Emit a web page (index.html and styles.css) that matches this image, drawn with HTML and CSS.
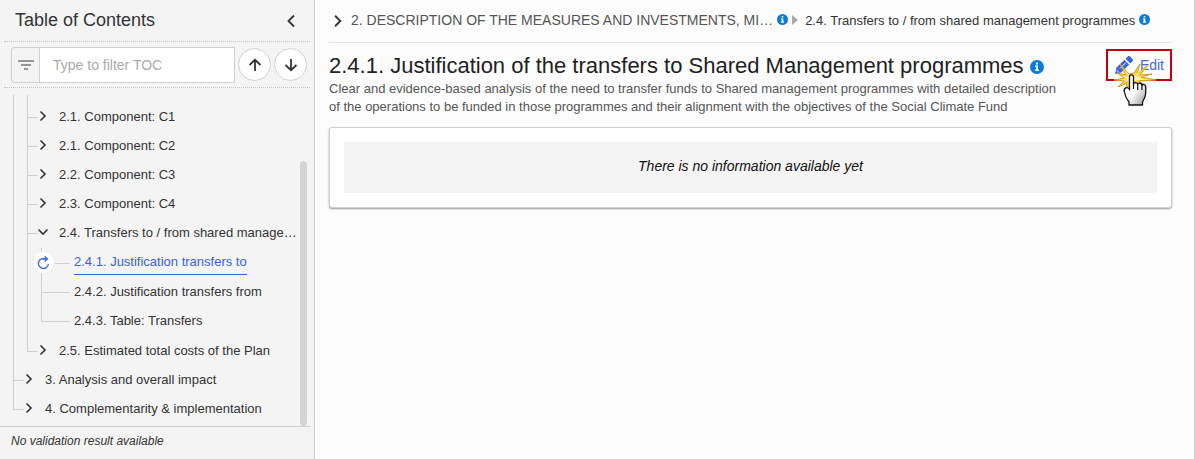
FILE: index.html
```
<!DOCTYPE html>
<html lang="en">
<head>
    <meta charset="UTF-8">
    <title>Transfers to / from shared management programmes</title>
    <meta name="viewport" content="width=device-width, initial-scale=1">
    <link rel="stylesheet" href="styles.css">
</head>
<body>

<!-- shared icons -->
<svg class="sprite" aria-hidden="true">
    <symbol id="chevron" viewBox="0 0 10 12">
        <path d="M2.5 1.5 L7 6 L2.5 10.5" fill="none" stroke="currentColor" stroke-width="1.6"/>
    </symbol>
    <symbol id="info" viewBox="0 0 14 14">
        <circle cx="7" cy="7" r="7" fill="#0d7ad8"/>
        <path d="M6 2.6h2v1.9H6zM5 5.6h3v4.1h1v1.3H5V9.7h1V6.9H5z" fill="#fff"/>
    </symbol>
</svg>

<div class="page">
    <aside class="sidebar">
        <header class="sidebar-header">
            <h2>Table of Contents</h2>
            <button class="icon-button collapse" aria-label="Collapse">
                <svg width="10" height="14" viewBox="0 0 10 14"><path d="M8 1.5 L2.5 7 L8 12.5" fill="none" stroke="currentColor" stroke-width="1.8"/></svg>
            </button>
        </header>

        <div class="filter">
            <label class="filter-icon" for="toc-filter" aria-label="Filter">
                <svg width="16" height="10" viewBox="0 0 16 10"><path d="M0 1h16M3 5h10M6 9h4" stroke="#777" stroke-width="1.6"/></svg>
            </label>
            <input id="toc-filter" type="text" placeholder="Type to filter TOC">
            <button class="round-button" aria-label="Previous">
                <svg width="14" height="14" viewBox="0 0 14 14"><path d="M7 13V2M1.5 7 L7 1.8 L12.5 7" fill="none" stroke="currentColor" stroke-width="1.8"/></svg>
            </button>
            <button class="round-button" aria-label="Next">
                <svg width="14" height="14" viewBox="0 0 14 14"><path d="M7 1v11M1.5 7 L7 12.2 L12.5 7" fill="none" stroke="currentColor" stroke-width="1.8"/></svg>
            </button>
        </div>

        <div class="tree-panel">
            <nav class="tree">
                <ul class="level-1">
                    <li class="parent">
                        <ul class="level-2">
                            <li class="spacer"></li>
                            <li><div class="row"><button class="icon-button toggle" aria-label="Expand"><svg><use href="#chevron"/></svg></button><a href="#">2.1. Component: C1</a></div></li>
                            <li><div class="row"><button class="icon-button toggle" aria-label="Expand"><svg><use href="#chevron"/></svg></button><a href="#">2.1. Component: C2</a></div></li>
                            <li><div class="row"><button class="icon-button toggle" aria-label="Expand"><svg><use href="#chevron"/></svg></button><a href="#">2.2. Component: C3</a></div></li>
                            <li><div class="row"><button class="icon-button toggle" aria-label="Expand"><svg><use href="#chevron"/></svg></button><a href="#">2.3. Component: C4</a></div></li>
                            <li>
                                <div class="row"><button class="icon-button toggle open" aria-label="Collapse"><svg><use href="#chevron"/></svg></button><a href="#">2.4. Transfers to / from shared manage…</a></div>
                                <ul class="level-3">
                                    <li>
                                        <div class="row current">
                                            <span class="status">
                                                <svg width="13" height="14" viewBox="0 0 13 14"><path d="M8.5 2.9 A5 5 0 1 0 11.4 8.2M5.6 3h5M7.7 0.4 L10.4 3 L7.7 5.6" fill="none" stroke="#4169e1" stroke-width="1.4"/></svg>
                                            </span>
                                            <a href="#">2.4.1. Justification transfers to</a>
                                        </div>
                                    </li>
                                    <li><div class="row"><a href="#">2.4.2. Justification transfers from</a></div></li>
                                    <li><div class="row"><a href="#">2.4.3. Table: Transfers</a></div></li>
                                </ul>
                            </li>
                            <li><div class="row"><button class="icon-button toggle" aria-label="Expand"><svg><use href="#chevron"/></svg></button><a href="#">2.5. Estimated total costs of the Plan</a></div></li>
                        </ul>
                    </li>
                    <li><div class="row"><button class="icon-button toggle" aria-label="Expand"><svg><use href="#chevron"/></svg></button><a href="#">3. Analysis and overall impact</a></div></li>
                    <li><div class="row"><button class="icon-button toggle" aria-label="Expand"><svg><use href="#chevron"/></svg></button><a href="#">4. Complementarity &amp; implementation</a></div></li>
                </ul>
            </nav>
            <div class="scroll-track"><div class="scroll-thumb"></div></div>
        </div>

        <footer class="validation">No validation result available</footer>
    </aside>

    <main class="content">
        <nav class="breadcrumb">
            <svg class="crumb-chevron"><use href="#chevron"/></svg>
            <a class="crumb-root" href="#">2. DESCRIPTION OF THE MEASURES AND INVESTMENTS, MI…</a>
            <svg class="info-small"><use href="#info"/></svg>
            <svg class="crumb-arrow" width="6" height="10" viewBox="0 0 6 10"><path d="M0 0l6 5-6 5z" fill="#aaa"/></svg>
            <a class="crumb-page" href="#">2.4. Transfers to / from shared management programmes</a>
            <svg class="info-small"><use href="#info"/></svg>
        </nav>

        <section class="heading">
            <div class="heading-text">
                <h1>2.4.1. Justification of the transfers to Shared Management programmes <svg class="info-large"><use href="#info"/></svg></h1>
                <p>Clear and evidence-based analysis of the need to transfer funds to Shared management programmes with detailed description of the operations to be funded in those programmes and their alignment with the objectives of the Social Climate Fund</p>
            </div>
            <div class="edit-wrap">
                <button class="edit">
                    <svg width="20" height="20" viewBox="0 0 20 20">
                        <path d="M1 19l1.4-6.2L10.400 4.800l4.800 4.800-8 8zM11.500 3.700l2.300-2.300a1.600 1.600 0 0 1 2.300 0l2.500 2.500a1.600 1.600 0 0 1 0 2.300l-2.300 2.300z" fill="#3b63e8"/>
                        <path d="M6 13.500l6-6" stroke="#fff" stroke-width="1"/>
                        <path d="M2.600 15.200l2.200 2.200" stroke="#fff" stroke-width="1"/>
                    </svg>
                    Edit
                </button>
                <!-- click marker with hand pointer -->
                <svg class="pointer" width="46" height="46" viewBox="0 0 46 46" aria-hidden="true">
                    <path d="M16 13L7 3l6 11-9-2 7 5-10 2 10 1-6 6 9-4-1 5 5-4 4 4 1-5 10 3-7-5 17-1-15-3 11-3-12 1 9-11-12 10 3-10-6 9z" fill="#f9d04a" stroke="#d9a01c" stroke-width="1" stroke-linejoin="round"/>
                    <path d="M18 16l-6-7 4 7-7-1 6 3-7 1 9 1 10-1 9 0-10-2 5-2-8 1 5-7-7 6z" fill="#fff3b0"/>
                    <defs><linearGradient id="hand" x1="0" y1="0" x2="1" y2="1"><stop offset=".5" stop-color="#fff"/><stop offset="1" stop-color="#999"/></linearGradient></defs>
                    <path d="M16.500 29V16c0-2.800 4-2.800 4 0v7c.4-2 4-1.900 4.200.3.700-1.700 4-1.400 4.200.9.700-1.300 3.700-.9 3.800 1.400.3 3.500.5 8-1.700 12.400l-1.500 3v3H16v-3C13.500 38 12 35 11.200 30.500 10.800 26.500 14 25.500 16.500 28z" fill="url(#hand)" stroke="#111" stroke-width="1.300" stroke-linejoin="round"/>
                    <path d="M20.500 22v6M24.700 23v6M28.900 24v5" stroke="#111" stroke-width="1.200"/>
                </svg>
            </div>
        </section>

        <section class="card">
            <p class="empty">There is no information available yet</p>
        </section>
    </main>
</div>

</body>
</html>
```
FILE: styles.css
```
:root {
    --line: #d0d0d0;
    --text: #333;
    --muted: #555;
    --accent: #3b5fe0;
    --sidebar-bg: #f4f4f4;
    --content-bg: #fcfcfc;
}

* {
    box-sizing: border-box;
}

body {
    margin: 0;
    font-family: "Liberation Sans", Arial, sans-serif;
    font-size: 13px;
    color: var(--text);
    background-color: var(--content-bg);
}

h1, h2, p, ul {
    margin: 0;
    padding: 0;
    font-weight: normal;
}

ul {
    list-style: none;
}

a {
    color: inherit;
    text-decoration: none;
}

button, input {
    font-family: inherit;
    color: inherit;
}

button {
    cursor: pointer;
}

.sprite {
    display: none;
}

.page {
    display: flex;
    min-height: 100vh;
}

/* Sidebar */
.sidebar {
    display: flex;
    flex-direction: column;
    flex: 0 0 315px;
    min-width: 0;
    background-color: var(--sidebar-bg);
    border-right: 1px solid var(--line);
}

.sidebar-header {
    display: flex;
    align-items: center;
    justify-content: space-between;
    height: 42px;
    margin: 0 4px;
    padding: 0 14px 0 11px;
    border-bottom: 1px dotted #c4c4c4;
}

.sidebar-header h2 {
    font-size: 18px;
}

.icon-button {
    display: flex;
    padding: 0;
    border: none;
    background: transparent;
}

.filter {
    display: flex;
    align-items: center;
    height: 46px;
    margin: 0 4px;
    padding: 0 3px 0 7px;
    border-bottom: 1px dotted #c4c4c4;
}

.filter-icon {
    display: flex;
    align-items: center;
    justify-content: center;
    width: 28px;
    height: 36px;
    border: 1px solid var(--line);
    border-right: none;
    border-radius: 4px 0 0 4px;
}

.filter input {
    flex: 1;
    min-width: 0;
    height: 36px;
    padding: 0 13px;
    border: 1px solid var(--line);
    font-size: 14px;
    background-color: #fff;
}

.filter input::placeholder {
    color: #aaa;
}

.round-button {
    display: flex;
    align-items: center;
    justify-content: center;
    flex: none;
    width: 33px;
    height: 33px;
    margin-left: 3px;
    padding: 0;
    border: 1px solid var(--line);
    border-radius: 50%;
    background-color: #fff;
}

/* Tree */
.tree-panel {
    display: flex;
    flex: 1;
    padding-top: 7px;
}

.tree {
    flex: 1;
    min-width: 0;
    padding-left: 13px;
}

/* vertical line and tick are painted as two backgrounds */
.tree li {
    --tick: 11px;
    --stem: 100%;
    background:
        linear-gradient(var(--line), var(--line)) 0 0 / 1px var(--stem) no-repeat,
        linear-gradient(var(--line), var(--line)) 0 15px / var(--tick) 1px no-repeat;
}

.tree li:last-child {
    --stem: 16px;
}

.tree .level-3 li {
    --tick: 29px;
}

.tree .parent,
.tree .spacer {
    --tick: 0;
}

.spacer {
    height: 7px;
}

.level-2,
.level-3 {
    padding-left: 14px;
}

.level-3 {
    padding-bottom: 1px;
    padding-top: 1px;
}

.row {
    display: flex;
    align-items: center;
    gap: 11px;
    height: 29px;
    padding-left: 11px;
}

.row a {
    white-space: nowrap;
    line-height: 24px;
}

.level-3 .row {
    padding-left: 33px;
}

.level-3 .current {
    gap: 19px;
    padding-left: 0;
}

.current a {
    color: var(--accent);
    border-bottom: 1px solid var(--accent);
}

.toggle {
    flex: none;
    padding-bottom: 2px;
}

.toggle svg {
    width: 10px;
    height: 12px;
}

.toggle.open svg {
    transform: rotate(90deg);
}

.status {
    display: flex;
    align-items: center;
    justify-content: center;
    flex: none;
    width: 23px;
    height: 23px;
    margin-left: -9px;
    border: 1px solid #eee;
    border-radius: 50%;
    background-color: #fff;
}

.scroll-track {
    display: flex;
    align-items: flex-end;
    flex: none;
    width: 14px;
    padding-right: 7px;
}

.scroll-thumb {
    width: 7px;
    height: 80%;
    border-radius: 4px;
    background-color: #d4d4d4;
}

.validation {
    height: 33px;
    margin-right: 4px;
    padding-left: 11px;
    border-top: 1px solid var(--line);
    font-size: 12px;
    font-style: italic;
    line-height: 28px;
}

/* Content */
.content {
    flex: 1;
    min-width: 0;
    padding: 0 22px 0 14px;
    border-right: 1px solid var(--line);
}

.breadcrumb {
    display: flex;
    align-items: center;
    height: 43px;
    padding-bottom: 2px;
    border-bottom: 1px solid #e6e6e6;
    white-space: nowrap;
}

.crumb-chevron {
    flex: none;
    width: 12px;
    height: 14px;
    margin: 2px 7px 0 3px;
}

.crumb-root {
    font-size: 14px;
    color: var(--muted);
}

.info-small {
    flex: none;
    width: 11px;
    height: 11px;
    margin: 0 4px 2px;
}

.crumb-arrow {
    flex: none;
    margin-right: 7px;
}

.heading {
    display: flex;
    align-items: flex-start;
    justify-content: space-between;
    padding: 6px 0 11px;
}

.heading-text {
    max-width: 735px;
    padding-top: 3px;
}

h1 {
    font-size: 22px;
    line-height: 28px;
    color: #222;
    white-space: nowrap;
}

.info-large {
    width: 14px;
    height: 14px;
    vertical-align: -1px;
}

.heading p {
    color: var(--muted);
    line-height: 18px;
}

.edit-wrap {
    position: relative;
}

.edit {
    display: flex;
    align-items: center;
    gap: 6px;
    height: 32px;
    padding: 0 6px;
    border: 2px solid #c40010;
    background-color: #fff;
    color: #4169e1;
    font-size: 14px;
}

.pointer {
    position: absolute;
    left: 7px;
    top: 12px;
}

.card {
    padding: 14px;
    border: 1px solid var(--line);
    border-radius: 3px;
    background-color: #fff;
    box-shadow: 0 1px 2px #999;
}

.empty {
    padding: 15px 16px 17px;
    background-color: var(--sidebar-bg);
    color: #111;
    font-size: 14px;
    font-style: italic;
    line-height: 19px;
    text-align: center;
}
```
